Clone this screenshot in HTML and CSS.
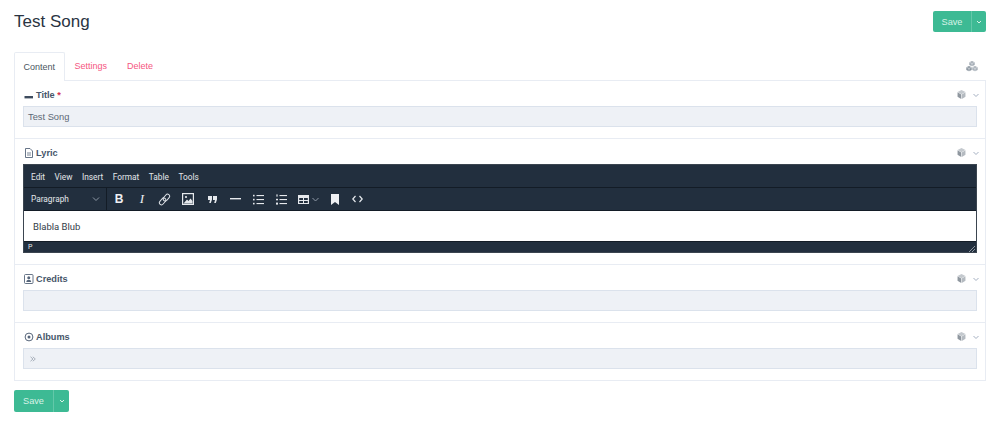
FILE: index.html
```html
<!DOCTYPE html>
<html lang="en">
<head>
    <meta charset="UTF-8">
    <meta name="viewport" content="width=device-width, initial-scale=1.0">
    <title>Test Song</title>
    <link rel="stylesheet" href="styles.css">
</head>
<body>
    <div class="container">
        <div class="page-header">
            <h1>Test Song</h1>
            <div class="save-group">
                <button class="save">Save</button>
                <button class="save-more"><svg width="8" height="8" viewBox="0 0 8 8"><path d="M2 3l2 2 2-2" fill="none" stroke="currentColor" stroke-width="1"/></svg></button>
            </div>
        </div>

        <div class="tabs">
            <a class="tab active">Content</a>
            <a class="tab">Settings</a>
            <a class="tab">Delete</a>
            <svg class="tabs-icon" width="12" height="11" viewBox="0 0 12 11">
                <path d="M6 0l2.700 1.200v2.800L6 5.300 3.300 4V1.200z" fill="#a3abb4"/>
                <path d="M3 5l2.700 1.200V9L3 10.300.3 9V6.200z" fill="#8c96a0"/>
                <path d="M9 5l2.700 1.200V9L9 10.300 6.300 9V6.200z" fill="#a9b1b9"/>
                <path d="M6 2.500v2.700M3 7.500v2.700M9 7.500v2.700M3.300 1.200L6 2.500l2.700-1.300M.3 6.200L3 7.500l2.700-1.300M6.300 6.200L9 7.500l2.700-1.300" fill="none" stroke="#e8ebee" stroke-width=".6"/>
            </svg>
        </div>

        <div class="panel">
            <div class="field">
                <div class="field-head">
                    <svg class="field-icon" width="10" height="10" viewBox="0 0 10 10"><rect x="0.500" y="6" width="8.500" height="2.400" fill="#3e4c5e"/></svg>
                    <span class="field-label">Title <span class="req">*</span></span>
                    <span class="field-tools">
                        <svg width="9" height="9" viewBox="0 0 10 10"><path d="M5 0l4.400 2.200L5 4.800.6 2.200z" fill="#c4c9ce"/><path d="M.6 2.600L4.700 5.100V10L.6 7.600z" fill="#8f979f"/><path d="M9.400 2.600L5.300 5.100V10l4.100-2.400z" fill="#b4bac0"/></svg>
                        <svg width="8" height="8" viewBox="0 0 8 8"><path d="M1.500 3L4 5.500 6.500 3" fill="none" stroke="#a5b0c2" stroke-width="1"/></svg>
                    </span>
                </div>
                <div class="input">Test Song</div>
            </div>

            <div class="field">
                <div class="field-head">
                    <svg class="field-icon" width="10" height="10" viewBox="0 0 10 10"><path d="M1.500 .5h4.500l2.500 2.500v6.500h-7z" fill="none" stroke="#56657a" stroke-width=".9"/><path d="M3 5h4M3 7h4" stroke="#56657a" stroke-width=".8"/></svg>
                    <span class="field-label">Lyric</span>
                    <span class="field-tools">
                        <svg width="9" height="9" viewBox="0 0 10 10"><path d="M5 0l4.400 2.200L5 4.800.6 2.200z" fill="#c4c9ce"/><path d="M.6 2.600L4.700 5.100V10L.6 7.600z" fill="#8f979f"/><path d="M9.400 2.600L5.300 5.100V10l4.100-2.400z" fill="#b4bac0"/></svg>
                        <svg width="8" height="8" viewBox="0 0 8 8"><path d="M1.500 3L4 5.500 6.500 3" fill="none" stroke="#a5b0c2" stroke-width="1"/></svg>
                    </span>
                </div>
                <div class="editor">
                    <div class="menubar">
                        <span>Edit</span><span>View</span><span>Insert</span><span>Format</span><span>Table</span><span>Tools</span>
                    </div>
                    <div class="toolbar">
                        <div class="format-select">
                            <span>Paragraph</span>
                            <svg width="8" height="8" viewBox="0 0 8 8"><path d="M1 2.500L4 5.500 7 2.500" fill="none" stroke="#8e99a6" stroke-width="1"/></svg>
                        </div>
                        <div class="tools">
                            <span class="tool tool-b">B</span>
                            <span class="tool tool-i">I</span>
                            <span class="tool tool-link"><svg width="13" height="13" viewBox="0 0 13 13"><g fill="none" stroke="#dfe3e8" stroke-width="1"><rect x="6.300" y="0.800" width="4.200" height="7.600" rx="2.100" transform="rotate(40 8.400 4.600)"/><rect x="2.500" y="4.600" width="4.200" height="7.600" rx="2.100" transform="rotate(40 4.600 8.400)"/></g></svg></span>
                            <span class="tool"><svg width="12" height="12" viewBox="0 0 12 12"><rect x=".6" y=".6" width="10.800" height="10.800" fill="none" stroke="#e6e9ed" stroke-width="1.200"/><path d="M1.500 10.500L5 6.500 6.500 8 8.500 5.500 10.500 8v2.500z" fill="#e6e9ed"/><circle cx="4" cy="4" r="1.100" fill="#e6e9ed"/></svg></span>
                            <span class="tool tool-quote"><svg width="9" height="7" viewBox="0 0 9 7"><path d="M0 0h4v3.500L2.800 7H1.200l.8-3H0zM5 0h4v3.500L7.800 7H6.200l.8-3H5z" fill="#e6e9ed"/></svg></span>
                            <span class="tool"><svg width="11" height="2" viewBox="0 0 11 2"><rect width="11" height="1.400" fill="#e6e9ed"/></svg></span>
                            <span class="tool"><svg width="11" height="11" viewBox="0 0 11 11"><g fill="#e6e9ed"><rect x="3.500" y="1" width="7.500" height="1.100"/><rect x="3.500" y="5" width="7.500" height="1.100"/><rect x="3.500" y="9" width="7.500" height="1.100"/><rect y=".8" width="1.600" height="1.600"/><rect y="4.800" width="1.600" height="1.600"/><rect y="8.800" width="1.600" height="1.600"/></g></svg></span>
                            <span class="tool"><svg width="11" height="11" viewBox="0 0 11 11"><g fill="#e6e9ed"><rect x="3.500" y="1" width="7.500" height="1.100"/><rect x="3.500" y="5" width="7.500" height="1.100"/><rect x="3.500" y="9" width="7.500" height="1.100"/><rect x=".4" y=".4" width="1.200" height="2.200"/><rect y="4.800" width="2" height="1.500"/><rect y="8.600" width="2" height="2"/></g></svg></span>
                            <span class="tool tool-table"><svg width="11" height="9" viewBox="0 0 11 9"><path d="M0 0h11v9H0zM1.200 3v2h3.800V3zm4.800 0v2h3.800V3zM1.200 6v2h3.800V6zm4.800 0v2h3.800V6z" fill="#e6e9ed" fill-rule="evenodd"/></svg><svg width="7" height="7" viewBox="0 0 7 7"><path d="M.5 2L3.500 5 6.500 2" fill="none" stroke="#8e99a6" stroke-width="1"/></svg></span>
                            <span class="tool"><svg width="8" height="11" viewBox="0 0 8 11"><path d="M0 0h8v11L4 8 0 11z" fill="#eef0f3"/></svg></span>
                            <span class="tool"><svg width="11" height="8" viewBox="0 0 11 8"><path d="M3.500 1L.8 4l2.700 3M7.500 1l2.700 3-2.700 3" fill="none" stroke="#e6e9ed" stroke-width="1.200"/></svg></span>
                        </div>
                    </div>
                    <div class="editor-body">Blabla Blub</div>
                    <div class="statusbar">
                        <span>P</span>
                        <svg width="6" height="6" viewBox="0 0 6 6"><path d="M6 0L0 6M6 3L3 6" stroke="#aab2bb" stroke-width=".8"/></svg>
                    </div>
                </div>
            </div>

            <div class="field">
                <div class="field-head">
                    <svg class="field-icon" width="10" height="10" viewBox="0 0 10 10"><rect x=".5" y=".5" width="8.500" height="9" rx="1" fill="none" stroke="#56657a" stroke-width=".9"/><circle cx="4.750" cy="3.800" r="1.500" fill="#56657a"/><path d="M2.300 8c0-3 4.900-3 4.900 0z" fill="#56657a"/></svg>
                    <span class="field-label">Credits</span>
                    <span class="field-tools">
                        <svg width="9" height="9" viewBox="0 0 10 10"><path d="M5 0l4.400 2.200L5 4.800.6 2.200z" fill="#c4c9ce"/><path d="M.6 2.600L4.700 5.100V10L.6 7.600z" fill="#8f979f"/><path d="M9.400 2.600L5.300 5.100V10l4.100-2.400z" fill="#b4bac0"/></svg>
                        <svg width="8" height="8" viewBox="0 0 8 8"><path d="M1.500 3L4 5.500 6.500 3" fill="none" stroke="#a5b0c2" stroke-width="1"/></svg>
                    </span>
                </div>
                <div class="input"></div>
            </div>

            <div class="field">
                <div class="field-head">
                    <svg class="field-icon" width="10" height="10" viewBox="0 0 10 10"><circle cx="5" cy="5" r="3.900" fill="none" stroke="#56657a" stroke-width="1"/><circle cx="5" cy="5" r="1.500" fill="#56657a"/></svg>
                    <span class="field-label">Albums</span>
                    <span class="field-tools">
                        <svg width="9" height="9" viewBox="0 0 10 10"><path d="M5 0l4.400 2.200L5 4.800.6 2.200z" fill="#c4c9ce"/><path d="M.6 2.600L4.700 5.100V10L.6 7.600z" fill="#8f979f"/><path d="M9.400 2.600L5.300 5.100V10l4.100-2.400z" fill="#b4bac0"/></svg>
                        <svg width="8" height="8" viewBox="0 0 8 8"><path d="M1.500 3L4 5.500 6.500 3" fill="none" stroke="#a5b0c2" stroke-width="1"/></svg>
                    </span>
                </div>
                <div class="input input-tags">
                    <svg width="6" height="6" viewBox="0 0 6 6"><path d="M.5 .8L3 3 .5 5.200M2.800 .8L5.300 3 2.800 5.200" fill="none" stroke="#a8b0bb" stroke-width="1"/></svg>
                </div>
            </div>
        </div>

        <div class="save-group footer-save">
            <button class="save save-big">Save</button>
            <button class="save-more"><svg width="8" height="8" viewBox="0 0 8 8"><path d="M2 3l2 2 2-2" fill="none" stroke="currentColor" stroke-width="1"/></svg></button>
        </div>
    </div>
</body>
</html>
```

FILE: styles.css
```css
body {
    margin: 0;
    font-family: "Liberation Sans", Arial, sans-serif;
    background-color: white;
    color: #2a3a4d;
}

.container {
    padding: 11px 14px 0;
}

.page-header {
    display: flex;
    justify-content: space-between;
    align-items: flex-start;
    height: 41px;
}

h1 {
    margin: 0;
    font-size: 17px;
    line-height: 22px;
    font-weight: 400;
    color: #2a3442;
}

.save-group {
    display: flex;
    height: 21px;
}

.save,
.save-more {
    border: none;
    padding: 0;
    color: #d8f2e7;
    background-color: #3dba94;
    font-family: inherit;
    font-size: 9.200px;
}

.save {
    width: 39px;
    border-radius: 2px 0 0 2px;
    border-right: 1px solid #63c8a9;
}

.save-more {
    width: 14px;
    display: flex;
    align-items: center;
    justify-content: center;
    border-radius: 0 2px 2px 0;
}

.tabs {
    display: flex;
    align-items: stretch;
    height: 28px;
}

.tab {
    padding: 0 10px;
    line-height: 28px;
    font-size: 9px;
    color: #f5567f;
}

.tab.active {
    padding: 0 8.500px;
    color: #4a5562;
    border: 1px solid #e8ecf3;
    border-bottom: none;
    border-radius: 2px 2px 0 0;
    background-color: white;
    margin-bottom: -1px;
    position: relative;
    z-index: 1;
    height: 28px;
}

.tabs-icon {
    margin: 9px 8px 0 auto;
}

.panel {
    border: 1px solid #e8ecf3;
}

.field {
    padding: 0 8px 11px;
    border-top: 1px solid #e8ecf3;
}

.field:first-child {
    border-top: none;
}

.field-head {
    display: flex;
    align-items: center;
    height: 23px;
    padding-top: 2px;
}

.field-icon {
    margin: 0 2px 0 1px;
}

.field-label {
    font-size: 9.200px;
    font-weight: 700;
    color: #47566a;
}

.req {
    color: #d5304f;
}

.field-tools {
    margin-left: auto;
    margin-right: -3px;
    display: flex;
    align-items: center;
    gap: 6px;
}

.input {
    height: 19px;
    line-height: 20px;
    padding: 0 4px;
    font-size: 9.300px;
    color: #5d6875;
    background-color: #eef1f6;
    border: 1px solid #dbe2ec;
}

.input-tags {
    display: flex;
    align-items: center;
    padding-left: 6px;
}

.editor {
    border: 1px solid #3b4550;
    background-color: #222f3e;
    color: #e4e7eb;
    font-family: Roboto, "Liberation Sans", sans-serif;
    font-size: 8.300px;
}

.menubar {
    display: flex;
    gap: 9.500px;
    align-items: center;
    height: 21px;
    padding: 1px 0 0 7px;
    border-bottom: 1px solid #131c26;
}

.toolbar {
    display: flex;
    height: 22px;
    border-bottom: 1px solid #131c26;
}

.format-select {
    display: flex;
    align-items: center;
    justify-content: space-between;
    width: 69px;
    padding: 0 6px 0 7px;
    border-right: 1px solid #131c26;
}

.tools {
    display: flex;
    align-items: center;
    padding-left: 0.500px;
}

.tool {
    width: 23px;
    display: flex;
    align-items: center;
    justify-content: center;
    color: #eef0f3;
}

.tool-b {
    font-family: "Liberation Sans", sans-serif;
    font-weight: 700;
    font-size: 12px;
}

.tool-i {
    font-family: "Liberation Serif", serif;
    font-style: italic;
    font-size: 13px;
}

.tool-link {
    padding-right: 2px;
    box-sizing: border-box;
}

.tool-quote {
    margin-left: 1.500px;
}

.tool-table {
    gap: 3px;
    width: 30px;
}

.editor-body {
    height: 30px;
    line-height: 32px;
    padding-left: 9px;
    background-color: white;
    color: #333d48;
    font-size: 9.500px;
}

.statusbar {
    display: flex;
    justify-content: space-between;
    align-items: flex-end;
    height: 10px;
    line-height: 10px;
    border-top: 1px solid #131c26;
    padding: 0 1px 0 4px;
    font-size: 7px;
}

.footer-save {
    margin-top: 9px;
    height: 22px;
    width: 55px;
}

.save-big {
    width: 40px;
}

.save-big + .save-more {
    width: 15px;
}
```
